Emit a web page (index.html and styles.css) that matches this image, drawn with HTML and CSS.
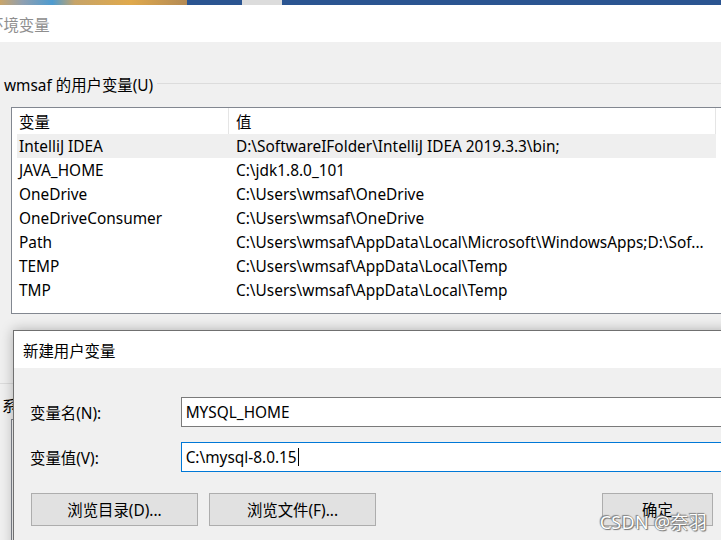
FILE: index.html
```html
<!DOCTYPE html>
<html>
<head>
  <meta charset='UTF-8'>
  <title>环境变量</title>
  <link rel="stylesheet" href="styles.css">
</head>
<body>
  <div class='screen'>
    <!-- desktop / taskbar strip peeking above the window -->
    <div class='strip'>
      <span class='wall'></span>
      <span class='task'></span>
      <span class='task-light'></span>
      <span class='task grow'></span>
    </div>

    <div class='window'>
      <div class='titlebar'><span class='title'>环境变量</span></div>
      <div class='client'>
        <div class='group'><span>wmsaf 的用户变量(U)</span><i class='line'></i></div>
        <div class='list'>
          <div class='list-head'>
            <div class='col1'>变量</div>
            <div class='col2'>值</div>
          </div>
          <div class='row sel'><div class='col1'>IntelliJ IDEA</div><div class='col2'>D:\SoftwareIFolder\IntelliJ IDEA 2019.3.3\bin;</div></div>
          <div class='row'><div class='col1'>JAVA_HOME</div><div class='col2'>C:\jdk1.8.0_101</div></div>
          <div class='row'><div class='col1'>OneDrive</div><div class='col2'>C:\Users\wmsaf\OneDrive</div></div>
          <div class='row'><div class='col1'>OneDriveConsumer</div><div class='col2'>C:\Users\wmsaf\OneDrive</div></div>
          <div class='row'><div class='col1'>Path</div><div class='col2'>C:\Users\wmsaf\AppData\Local\Microsoft\WindowsApps;D:\Sof...</div></div>
          <div class='row'><div class='col1'>TEMP</div><div class='col2'>C:\Users\wmsaf\AppData\Local\Temp</div></div>
          <div class='row'><div class='col1'>TMP</div><div class='col2'>C:\Users\wmsaf\AppData\Local\Temp</div></div>
        </div>
        <div class='sep'></div>
        <div class='group sys'><span>系统变量(S)</span><i class='line'></i></div>
        <div class='list sys-list'></div>
      </div>
    </div>

    <!-- modal dialog on top -->
    <div class='dialog'>
      <div class='dlg-title'>新建用户变量</div>
      <div class='dlg-body'>
        <div class='field'>
          <label>变量名(N):</label>
          <div class='input'>MYSQL_HOME</div>
        </div>
        <div class='field'>
          <label>变量值(V):</label>
          <div class='input focus'>C:\mysql-8.0.15<span class='caret'></span></div>
        </div>
        <div class='buttons'>
          <button class='btn'>浏览目录(D)...</button>
          <button class='btn'>浏览文件(F)...</button>
          <button class='btn ok'>确定</button>
        </div>
      </div>
    </div>

    <div class='watermark'>CSDN @奈羽</div>
  </div>
</body>
</html>
```

FILE: styles.css
```css
* { margin: 0; padding: 0; box-sizing: border-box; }
body { width: 721px; height: 540px; overflow: hidden; background: #f0f0f0; font-family: "Noto Sans", "Noto Sans CJK SC", sans-serif; font-size: 15.4px; color: #000; }
.screen { position: relative; width: 721px; height: 540px; overflow: hidden; }

.strip { display: flex; height: 5px; }
.wall { width: 187px; background: linear-gradient(90deg, #c9a56a 0%, #8f9fb0 12%, #4d9bd0 28%, #c7a468 40%, #e0a94c 70%, #b38a55 100%); }
.task { width: 55px; background: #2b5591; }
.task-light { width: 40px; background: #dcdcdc; }
.task.grow { flex: 1; }

.titlebar { height: 37px; background: #fff; display: flex; align-items: center; overflow: hidden; }
.title { margin-left: -12px; color: #8e8e8e; padding-top: 1px; }

.client { background: #f0f0f0; padding-top: 32px; }
.group { display: flex; align-items: center; gap: 4px; padding-left: 4px; height: 20px; }
.group .line { flex: 1; height: 1px; background: #dcdcdc; margin-top: -2px; }

.list { margin: 13px 0 0 11px; width: 740px; height: 207px; background: #fff; border: 1px solid #828790; padding-left: 5px; }
.list-head { display: flex; height: 26px; align-items: center; }
.list-head .col1 { border-right: 1px solid #e5e5e5; height: 100%; display: flex; align-items: center; }
.list-head .col2 { border-right: 1px solid #e5e5e5; height: 100%; display: flex; align-items: center; }
.col1 { width: 212px; padding-left: 2px; white-space: nowrap; }
.col2 { width: 487px; padding-left: 7px; white-space: nowrap; }
.row { display: flex; height: 24px; align-items: center; }
.row.sel { background: #efefef; width: 699px; }

.sep { height: 1px; background: #dcdcdc; margin-top: 69px; width: 14px; }
.group.sys { margin-top: 11px; padding-left: 2px; }
.list.sys-list { margin-top: 4px; height: 200px; }

.dialog { position: absolute; left: 13px; top: 330px; width: 720px; height: 230px; background: #f0f0f0; border: 1px solid #707070; box-shadow: 0 0 12px rgba(0,0,0,0.28); }
.dlg-title { height: 37px; background: #fff; padding-left: 9px; display: flex; align-items: center; padding-top: 1px; }
.dlg-body { padding: 29px 0 0 16px; }
.field { display: flex; align-items: center; margin-bottom: 15px; }
.field label { width: 153px; }
.input { width: 560px; height: 30px; background: #fff; border: 1px solid #7a7a7a; padding-left: 4px; display: flex; align-items: center; }
.input.focus { height: 30px; border-color: #0078d7; }
.caret { display: inline-block; width: 1px; height: 18px; background: #000; margin-left: 1px; }

/* margin collapses with the field's 15px, so this is the real gap */
.buttons { display: flex; gap: 11px; margin-top: 21px; padding-left: 1px; }
button.btn { width: 167px; height: 33px; background: #e1e1e1; border: 1px solid #adadad; font-family: inherit; font-size: 15.4px; color: #000; }
button.btn.ok { width: 111px; margin-left: 215px; }

.watermark { position: absolute; right: 14px; bottom: 6px; font-size: 18px; color: #fff; text-shadow: 0 0 1px #555, 1px 1px 1px #777, -1px -1px 1px #888; letter-spacing: 0.3px; }
```
